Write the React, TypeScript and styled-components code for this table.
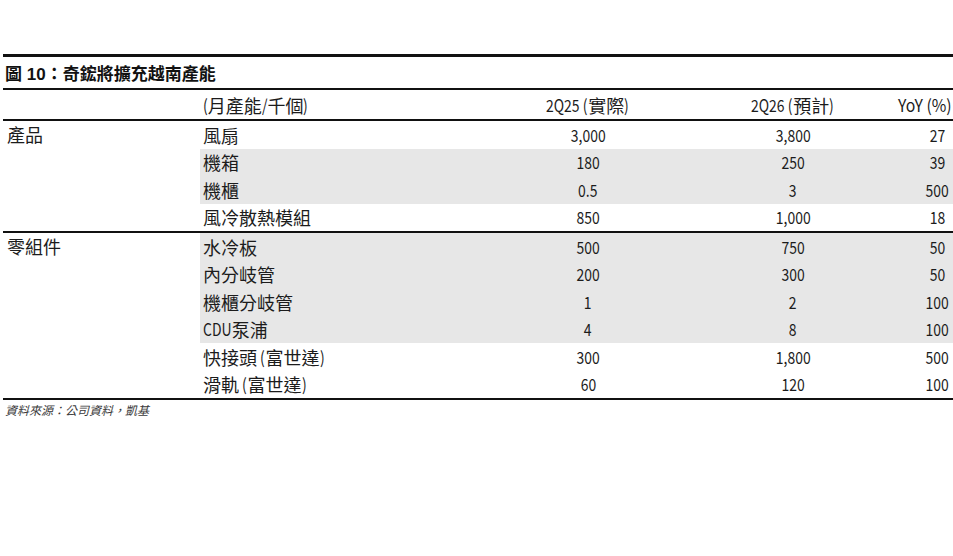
import React from "react";
import styled, { createGlobalStyle } from "styled-components";

const Global = createGlobalStyle`
  html, body { margin: 0; padding: 0; background: #fff; }
  body { font-family: "Noto Sans CJK TC", sans-serif; color: #1c1c1c; }
`;

const Page = styled.div`
  width: 953px;
  height: 556px;
  padding: 54px 0 0 3px;
  box-sizing: border-box;
`;

const Rule = styled.div<{ $w: number }>`
  height: ${(p) => p.$w}px;
  background: #111;
`;

const Title = styled.div`
  height: 31px;
  display: flex;
  align-items: center;
  padding-left: 2px;
  font-family: "Liberation Sans", "Noto Sans CJK TC", sans-serif;
  font-weight: 700;
  font-size: 17px;
  color: #111;
`;

type Align = "left" | "center" | "right";

const HeadRow = styled.div`
  display: grid;
  grid-template-columns: 197px 290px 196px 214px 1fr;
  height: 29px;
  align-items: center;
`;

const Cell = styled.div<{ $align?: Align; $pl?: number; $pr?: number }>`
  display: flex;
  align-items: center;
  justify-content: ${(p) =>
    p.$align === "right" ? "flex-end" : p.$align === "center" ? "center" : "flex-start"};
  min-width: 0;
  font-family: "Noto Sans CJK TC", sans-serif;
  font-size: 18px;
  line-height: 20px;
  white-space: nowrap;
  padding: 0 ${(p) => p.$pr ?? 0}px 0 ${(p) => p.$pl ?? 0}px;
  color: #1c1c1c;
`;

/* Latin runs are drawn condensed, like the narrow Latin glyphs of the source font */
const Lat = styled.span<{ $origin?: Align; $trim?: number; $scale?: number }>`
  display: inline-block;
  font-size: 17px;
  transform: scaleX(${(p) => p.$scale ?? 0.82});
  transform-origin: ${(p) => p.$origin ?? "left"} center;
  margin-right: ${(p) => -(p.$trim ?? 0)}px;
  white-space: pre;
  flex: none;
`;

const Group = styled.div`
  display: grid;
  grid-template-columns: 197px 1fr;
`;

const Category = styled.div`
  font-family: "Noto Sans CJK TC", sans-serif;
  font-size: 18px;
  line-height: 20px;
  padding: 3px 0 0 4px;
  color: #1c1c1c;
`;

const Rows = styled.div`
  display: flex;
  flex-direction: column;
`;

const Row = styled.div<{ $shade?: boolean }>`
  display: grid;
  grid-template-columns: 290px 196px 214px 1fr;
  height: 27.5px;
  align-items: center;
  background: ${(p) => (p.$shade ? "#e7e7e7" : "transparent")};
`;

const Source = styled.div`
  font-family: "Noto Sans CJK TC", sans-serif;
  font-style: italic;
  font-size: 12px;
  line-height: 16px;
  padding: 2px 0 0 2px;
  color: #3a3a3a;
`;

type Item = { name: React.ReactNode; key: string; a: string; b: string; y: string; shade?: boolean };

const groups: { cat: string; items: Item[] }[] = [
  {
    cat: "產品",
    items: [
      { key: "fan", name: "風扇", a: "3,000", b: "3,800", y: "27" },
      { key: "case", name: "機箱", a: "180", b: "250", y: "39", shade: true },
      { key: "rack", name: "機櫃", a: "0.5", b: "3", y: "500", shade: true },
      { key: "air", name: "風冷散熱模組", a: "850", b: "1,000", y: "18" },
    ],
  },
  {
    cat: "零組件",
    items: [
      { key: "cold", name: "水冷板", a: "500", b: "750", y: "50", shade: true },
      { key: "mani", name: "內分岐管", a: "200", b: "300", y: "50", shade: true },
      { key: "rmani", name: "機櫃分岐管", a: "1", b: "2", y: "100", shade: true },
      {
        key: "cdu",
        name: (
          <>
            <Lat $trim={6}>CDU</Lat>泵浦
          </>
        ),
        a: "4",
        b: "8",
        y: "100",
        shade: true,
      },
      {
        key: "qd",
        name: (
          <>
            快接頭<Lat $trim={1}> (</Lat>富世達<Lat>)</Lat>
          </>
        ),
        a: "300",
        b: "1,800",
        y: "500",
      },
      {
        key: "rail",
        name: (
          <>
            滑軌<Lat $trim={1}> (</Lat>富世達<Lat>)</Lat>
          </>
        ),
        a: "60",
        b: "120",
        y: "100",
      },
    ],
  },
];

export default function App() {
  return (
    <>
      <Global />
      <Page>
        <Rule $w={3} />
        <Title>圖 10：奇鋐將擴充越南產能</Title>
        <Rule $w={2} />
        <HeadRow>
          <Cell />
          <Cell $pl={3}>
            <Lat $trim={1}>(</Lat>月產能<Lat $trim={1}>/</Lat>千個<Lat>)</Lat>
          </Cell>
          <Cell $align="center">
            <Lat $trim={8}>2Q25 (</Lat>實際<Lat>)</Lat>
          </Cell>
          <Cell $align="center">
            <Lat $trim={8}>2Q26 (</Lat>預計<Lat>)</Lat>
          </Cell>
          <Cell $align="right" $pr={1}>
            <Lat $origin="right" $scale={0.93}>YoY (%)</Lat>
          </Cell>
        </HeadRow>
        <Rule $w={2} />
        {groups.map((g, gi) => (
          <React.Fragment key={g.cat}>
            {gi > 0 && <Rule $w={2} />}
            <Group>
              <Category>{g.cat}</Category>
              <Rows>
                {g.items.map((it) => (
                  <Row key={it.key} $shade={it.shade}>
                    <Cell $pl={3}>{it.name}</Cell>
                    <Cell $align="center">
                      <Lat $origin="center">{it.a}</Lat>
                    </Cell>
                    <Cell $align="center">
                      <Lat $origin="center">{it.b}</Lat>
                    </Cell>
                    <Cell $align="center" $pl={21}>
                      <Lat $origin="center">{it.y}</Lat>
                    </Cell>
                  </Row>
                ))}
              </Rows>
            </Group>
          </React.Fragment>
        ))}
        <Rule $w={2} />
        <Source>資料來源：公司資料，凱基</Source>
      </Page>
    </>
  );
}
